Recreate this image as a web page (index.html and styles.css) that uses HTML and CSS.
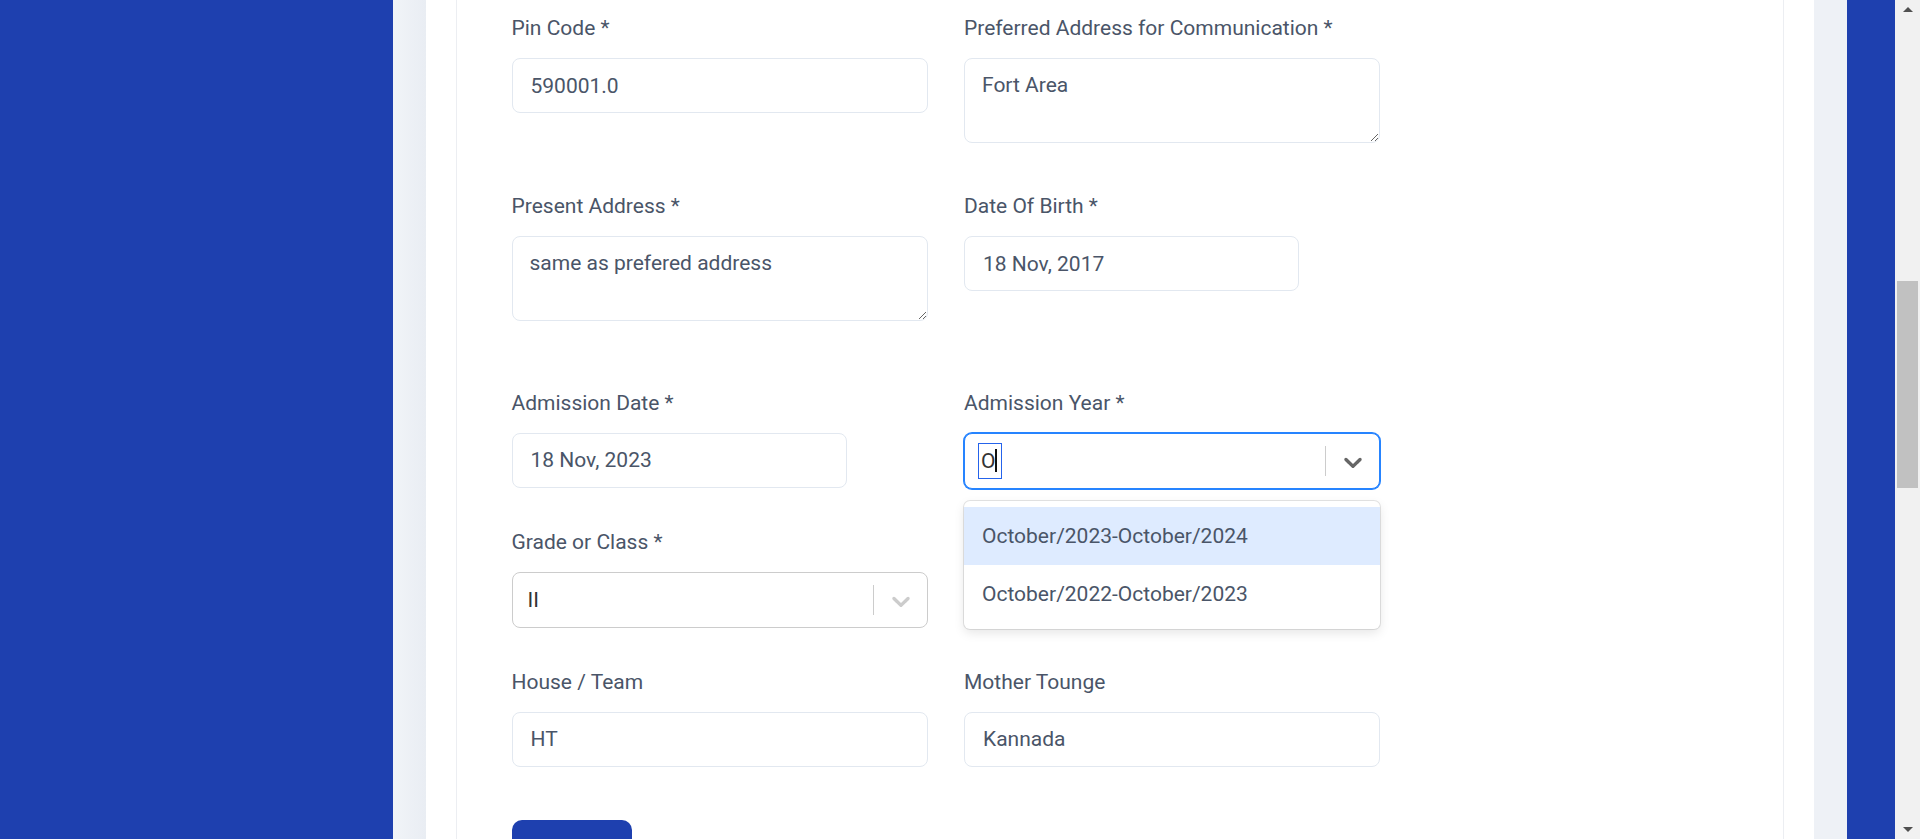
FILE: index.html
```html
<!DOCTYPE html>
<html lang="en">
<head>
<meta charset="utf-8">
<title>Student Form</title>
<link rel="stylesheet" href="styles.css">
</head>
<body>
<div class="app">
  <aside class="sidebar"></aside>
  <main class="main">
    <div class="panel">
      <div class="card">
        <form class="form">
          <div class="row">
            <div class="field">
              <label class="label">Pin Code *</label>
              <input class="input" type="text" value="590001.0" readonly>
            </div>
            <div class="field">
              <label class="label">Preferred Address for Communication *</label>
              <textarea class="textarea" readonly>Fort Area</textarea>
            </div>
          </div>

          <div class="row row-2">
            <div class="field">
              <label class="label">Present Address *</label>
              <textarea class="textarea" readonly>same as prefered address</textarea>
            </div>
            <div class="field">
              <label class="label">Date Of Birth *</label>
              <input class="input input-short" type="text" value="18 Nov, 2017" readonly>
            </div>
          </div>

          <div class="row row-3">
            <div class="field">
              <label class="label">Admission Date *</label>
              <input class="input input-short" type="text" value="18 Nov, 2023" readonly>
            </div>
            <div class="field">
              <label class="label">Admission Year *</label>
              <div class="select select-focused">
                <div class="select-value">
                  <span class="typed">O<span class="caret"></span></span>
                </div>
                <span class="select-sep"></span>
                <span class="select-indicator">
                  <svg class="chevron chevron-dark" viewBox="0 0 20 20" width="30" height="30" aria-hidden="true"><path d="M4.516 7.548c0.436-0.446 1.043-0.481 1.576 0l3.908 3.747 3.908-3.747c0.533-0.481 1.141-0.446 1.574 0 0.436 0.445 0.408 1.197 0 1.615-0.406 0.418-4.695 4.502-4.695 4.502-0.217 0.223-0.502 0.335-0.787 0.335s-0.57-0.112-0.789-0.335c0 0-4.287-4.084-4.695-4.502s-0.436-1.17 0-1.615z"/></svg>
                </span>
                <div class="menu">
                  <div class="option option-active">October/2023-October/2024</div>
                  <div class="option">October/2022-October/2023</div>
                </div>
              </div>
            </div>
          </div>

          <div class="row row-4">
            <div class="field">
              <label class="label">Grade or Class *</label>
              <div class="select">
                <div class="select-value"><span class="select-text">II</span></div>
                <span class="select-sep"></span>
                <span class="select-indicator">
                  <svg class="chevron" viewBox="0 0 20 20" width="30" height="30" aria-hidden="true"><path d="M4.516 7.548c0.436-0.446 1.043-0.481 1.576 0l3.908 3.747 3.908-3.747c0.533-0.481 1.141-0.446 1.574 0 0.436 0.445 0.408 1.197 0 1.615-0.406 0.418-4.695 4.502-4.695 4.502-0.217 0.223-0.502 0.335-0.787 0.335s-0.57-0.112-0.789-0.335c0 0-4.287-4.084-4.695-4.502s-0.436-1.17 0-1.615z"/></svg>
                </span>
              </div>
            </div>
            <div class="field"></div>
          </div>

          <div class="row row-5">
            <div class="field">
              <label class="label">House / Team</label>
              <input class="input" type="text" value="HT" readonly>
            </div>
            <div class="field">
              <label class="label">Mother Tounge</label>
              <input class="input" type="text" value="Kannada" readonly>
            </div>
          </div>

          <div class="actions">
            <button class="btn" type="button" aria-label="Submit"></button>
          </div>
        </form>
      </div>
    </div>
  </main>
  <div class="edge"></div>
  <div class="scrollbar">
    <div class="sb-btn"><span class="tri tri-up"></span></div>
    <div class="sb-track"><div class="sb-thumb"></div></div>
    <div class="sb-btn"><span class="tri tri-down"></span></div>
  </div>
</div>
</body>
</html>
```

FILE: styles.css
```css
* { box-sizing: border-box; }

html, body {
  margin: 0;
  padding: 0;
  height: 839px;
  overflow: hidden;
}

body {
  font-family: Roboto, "Liberation Sans", Arial, sans-serif;
  color: #4a5568;
  background: #1e40af;
}

.app {
  display: flex;
  height: 839px;
  overflow: hidden;
}

.sidebar {
  width: 393px;
  flex: 0 0 393px;
  background: #1e40af;
}

.main {
  flex: 0 0 1454px;
  padding: 0 33px;
  overflow: hidden;
  background: linear-gradient(to right, #f1f4f8 0, #e9edf3 33px, #eef1f6 34px, #eef1f6 100%);
}

.panel {
  height: 100%;
  background: #ffffff;
  padding: 0 30px;
}

.card {
  height: 100%;
  overflow: hidden;
  border-left: 1px solid #eceef2;
  border-right: 1px solid #eceef2;
  padding: 14px 0 0 54.5px;
}

.form {
  display: flex;
  flex-direction: column;
}

.row {
  display: grid;
  grid-template-columns: 416.5px 417px;
  column-gap: 36px;
  align-items: start;
}

.row-2 { margin-top: 49px; }
.row-3 { margin-top: 67.5px; }
.row-4 { margin-top: 39.5px; }
.row-5 { margin-top: 39.5px; }

.field {
  display: flex;
  flex-direction: column;
  position: relative;
}

.label {
  display: block;
  font-size: 21px;
  line-height: 28px;
  color: #4a5568;
  margin-bottom: 16px;
}

.input,
.textarea {
  display: block;
  width: 416px;
  font-family: Roboto, "Liberation Sans", Arial, sans-serif;
  font-size: 21px;
  color: #4a5568;
  background: #ffffff;
  border: 1px solid #e2e8f0;
  border-radius: 8px;
  outline: none;
  margin: 0;
}

.input {
  height: 55px;
  padding: 0 18px;
}

.input-short {
  width: 335px;
}

.textarea {
  height: 85px;
  padding: 12px 17px;
  line-height: 28px;
}

/* react-select style control */
.select {
  position: relative;
  display: flex;
  align-items: center;
  width: 416px;
  height: 56px;
  background: #ffffff;
  border: 1px solid #cccccc;
  border-radius: 8px;
}

.select-focused {
  border-color: #2684ff;
  box-shadow: 0 0 0 1px #2684ff;
}

.select-value {
  flex: 1;
  display: flex;
  align-items: center;
  padding-left: 13px;
  font-size: 21px;
  color: #333333;
}

.select-text {
  padding-left: 2px;
}

.typed {
  display: inline-flex;
  align-items: center;
  width: 24px;
  height: 36px;
  padding-left: 2px;
  border: 1px solid #2563eb;
  color: #333333;
  font-size: 21px;
  line-height: 24px;
}

.caret {
  display: inline-block;
  width: 1.5px;
  height: 23px;
  background: #111111;
}

.select-sep {
  width: 1px;
  height: 30px;
  background: #cccccc;
}

.select-indicator {
  display: flex;
  align-items: center;
  padding: 0 11px 0 12px;
}

.chevron {
  display: block;
  fill: #cccccc;
  margin-top: 1px;
}

.chevron-dark {
  fill: #666666;
  margin-top: 3px;
}

.menu {
  position: absolute;
  top: calc(100% + 13px);
  left: -1px;
  right: -1px;
  z-index: 10;
  background: #ffffff;
  border-radius: 6px;
  padding: 6px 0;
  box-shadow: 0 0 0 1px rgba(0, 0, 0, 0.1), 0 4px 11px rgba(0, 0, 0, 0.1);
}

.option {
  display: flex;
  align-items: center;
  height: 58px;
  padding: 0 18px;
  font-size: 21px;
  color: #4a5568;
}

.option-active {
  background: #deebff;
}

.actions {
  margin-top: 53.5px;
}

.btn {
  display: block;
  width: 120px;
  height: 56px;
  border: none;
  border-radius: 10px;
  background: #1e40af;
  padding: 0;
}

.edge {
  flex: 0 0 48px;
  background: #1e40af;
}

.scrollbar {
  flex: 0 0 25px;
  display: flex;
  flex-direction: column;
  background: #f1f1f1;
}

.sb-btn {
  height: 25px;
  display: flex;
  align-items: center;
  justify-content: center;
}

.sb-track {
  flex: 1;
  padding: 0 2px;
}

.sb-thumb {
  margin-top: 256px;
  height: 207px;
  background: #c1c1c1;
}

.tri {
  width: 0;
  height: 0;
  border-left: 5px solid transparent;
  border-right: 5px solid transparent;
}

.tri-up {
  border-bottom: 5px solid #505050;
  margin-top: -6px;
}

.tri-down {
  border-top: 5px solid #505050;
  margin-top: 6px;
}
```
